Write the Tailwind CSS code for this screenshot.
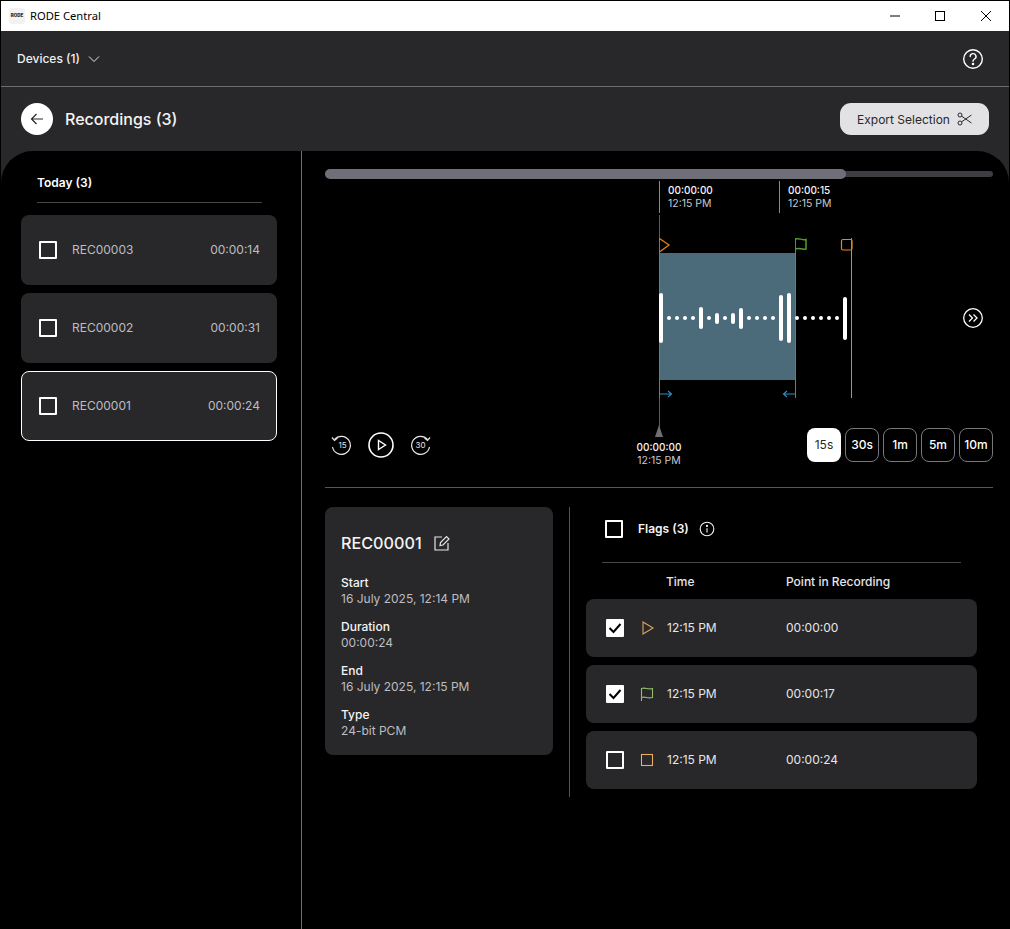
<!doctype html>
<html><head><meta charset="utf-8">
<script src="https://cdn.jsdelivr.net/npm/@tailwindcss/browser@4"></script>
</head>
<body class="bg-black">
<div class="w-[1010px] h-[929px] flex flex-col overflow-hidden border-t border-x border-black bg-[#28282a] font-['Inter',sans-serif] text-white">
  <!-- title bar -->
  <div class="h-[30px] shrink-0 bg-white flex items-center text-black">
    <div class="ml-[8px] w-4 h-4 rounded-[3px] bg-[#f2f2f2] flex items-center justify-center text-[4.5px] font-black leading-none text-[#333]">RODE</div>
    <span class="ml-[5px] font-['Noto_Sans',sans-serif] text-[11.2px]">RODE Central</span>
    <div class="ml-auto flex items-center">
      <svg class="w-[46px] h-[30px]" viewBox="0 0 46 30"><path d="M19 15h10" stroke="#000" fill="none"/></svg>
      <svg class="w-[46px] h-[30px]" viewBox="0 0 46 30"><rect x="18.5" y="10.5" width="9" height="9" stroke="#000" fill="none"/></svg>
      <svg class="w-[46px] h-[30px]" viewBox="0 0 46 30"><path d="M18 10l10 10M28 10l-10 10" stroke="#000" fill="none"/></svg>
    </div>
  </div>
  <!-- nav -->
  <div class="h-[56px] shrink-0 flex items-center pl-4 pr-[25px] border-b border-[#6c6c72]">
    <span class="text-[12px] font-medium text-[#f0f0f2]">Devices (1)</span>
    <svg class="ml-2 w-[12px] h-[8px]" viewBox="0 0 12 8"><path d="M1 1.500l5 5 5-5" stroke="#e6e6e8" fill="none"/></svg>
    <svg class="ml-auto w-[22px] h-[22px]" viewBox="0 0 22 22" fill="none" stroke="#fff" stroke-width="1.400"><circle cx="11" cy="11" r="9.300"/><path d="M8.200 8.600a2.900 2.900 0 1 1 4.400 2.400c-1 .6-1.600 1.100-1.600 2.300" stroke-linecap="round"/><circle cx="11" cy="16" r=".6" fill="#fff"/></svg>
  </div>
  <!-- header -->
  <div class="h-[64px] shrink-0 flex items-center pl-5 pr-5">
    <div class="w-8 h-8 rounded-full bg-white flex items-center justify-center">
      <svg class="w-[14px] h-[12px]" viewBox="0 0 14 12" fill="none" stroke="#28282a" stroke-width="1.200"><path d="M13 6H1.500M6.500 1l-5 5 5 5"/></svg>
    </div>
    <span class="ml-3 text-[16px] font-medium text-[#f4f4f5]">Recordings (3)</span>
    <div class="ml-auto w-[149px] h-8 rounded-[11px] bg-[#e2e2e5] flex items-center justify-center gap-[7px] text-[#28282a]">
      <span class="text-[12px] font-normal pt-[2px]">Export Selection</span>
      <svg class="w-[15px] h-[14px]" viewBox="0 0 15 14" fill="none" stroke="#28282a" stroke-width="1"><circle cx="3" cy="3" r="2"/><circle cx="3" cy="11" r="2"/><path d="M4.600 4.200L14.500 11M4.600 9.800L14.500 3"/></svg>
    </div>
  </div>
  <!-- main -->
  <div class="flex-1 flex bg-black rounded-t-[32px] overflow-hidden min-h-0">
    <!-- left -->
    <div class="w-[301px] shrink-0 border-r border-[#6c6c72] pl-5 pr-[24px]">
      <div class="mx-4 h-[52px] pt-[24px] border-b border-[#48484c] text-[12px] font-semibold leading-[15px] mr-[-1px] w-[225px]">Today (3)</div>
      <div class="mt-3 flex flex-col gap-2">
        <div class="h-[70px] rounded-lg bg-[#28282a] flex items-center pl-[18px] pr-[17px] text-[12px] text-[#bdbdc0]">
          <div class="w-[18px] h-[18px] border-2 border-white rounded-[1px]"></div><span class="ml-[15px]">REC00003</span><span class="ml-auto">00:00:14</span>
        </div>
        <div class="h-[70px] rounded-lg bg-[#28282a] flex items-center pl-[18px] pr-[17px] text-[12px] text-[#bdbdc0]">
          <div class="w-[18px] h-[18px] border-2 border-white rounded-[1px]"></div><span class="ml-[15px]">REC00002</span><span class="ml-auto">00:00:31</span>
        </div>
        <div class="h-[70px] rounded-lg bg-[#28282a] border border-white flex items-center pl-[17px] pr-[16px] text-[12px] text-[#bdbdc0]">
          <div class="w-[18px] h-[18px] border-2 border-white rounded-[1px]"></div><span class="ml-[15px]">REC00001</span><span class="ml-auto">00:00:24</span>
        </div>
      </div>
    </div>
    <!-- right -->
    <div class="flex-1 pl-[23px] pr-4 min-w-0">
      <!-- timeline canvas: origin x=325,y=151 -->
      <div class="relative h-[337px] border-b border-[#55555a] w-[668px]">
        <div class="absolute left-0 right-0 top-[20px] h-[6px] rounded-full bg-[#3d3d42]"></div>
        <div class="absolute left-0 w-[521px] top-[18px] h-[10px] rounded-full bg-[#6f6f78]"></div>

        <div class="absolute left-[334px] top-[30px] w-px h-[32px] bg-[#8a8a8e]"></div>
        <div class="absolute left-[343px] top-[33px] text-[10px] leading-[13px] whitespace-nowrap"><div class="font-medium text-[#f4f4f5]">00:00:00</div><div class="text-[10.500px] text-[#c8c8cc]">12:15 PM</div></div>
        <div class="absolute left-[454px] top-[30px] w-px h-[32px] bg-[#8a8a8e]"></div>
        <div class="absolute left-[463px] top-[33px] text-[10px] leading-[13px] whitespace-nowrap"><div class="font-medium text-[#f4f4f5]">00:00:15</div><div class="text-[10.500px] text-[#c8c8cc]">12:15 PM</div></div>

        <div class="absolute left-[334px] top-[64px] w-px h-[212px] bg-[#5c5c62]"></div>
        <div class="absolute left-[334px] top-[102px] w-[136px] h-[127px] bg-[#4b6a7a]"></div>
        <div class="absolute left-[334px] top-[87px] w-px h-[160px] bg-[#2f8fc4]"></div>
        <div class="absolute left-[470px] top-[87px] w-px h-[160px] bg-[#2f8fc4]"></div>
        <div class="absolute left-[526px] top-[87px] w-px h-[160px] bg-[#e8861c]"></div>

        <svg class="absolute left-[330px] top-[80px] overflow-visible" width="200" height="180" viewBox="0 0 200 180" fill="none">
          <path d="M4.500 7.500l9.500 6.500-9.500 7" stroke="#e8861c" stroke-width="1.200"/>
          <path d="M140.500 8c3.500-1.500 6.500 1.500 10.500 0.500v9.500c-4 1-7-1.500-10.500 0" stroke="#4ea02c" stroke-width="1.500"/>
          <rect x="186.500" y="8.500" width="10.500" height="10.500" rx="1.500" stroke="#e8861c" stroke-width="1.200"/>
          <path d="M5 163h11M13 160l3.500 3-3.500 3" stroke="#2f8fc4" stroke-width="1.100"/>
          <path d="M140 163h-11M132 160l-3.500 3 3.500 3" stroke="#2f8fc4" stroke-width="1.100"/>
        </svg>

        <!-- waveform -->
        <div class="absolute left-[334px] top-[142px] h-[50px] w-[188px] flex items-center">
          <div class="w-[4px] h-[50px] rounded-full bg-white"></div>
          <div class="flex items-center gap-[4px] ml-[4px]">
            <div class="w-[4px] h-[4px] rounded-full bg-white"></div><div class="w-[4px] h-[4px] rounded-full bg-white"></div><div class="w-[4px] h-[4px] rounded-full bg-white"></div><div class="w-[4px] h-[4px] rounded-full bg-white"></div>
            <div class="w-[4px] h-[22px] rounded-full bg-white"></div>
            <div class="w-[4px] h-[4px] rounded-full bg-white"></div>
            <div class="w-[4px] h-[11px] rounded-full bg-white"></div>
            <div class="w-[4px] h-[4px] rounded-full bg-white"></div>
            <div class="w-[4px] h-[11px] rounded-full bg-white"></div>
            <div class="w-[4px] h-[21px] rounded-full bg-white"></div>
            <div class="w-[4px] h-[4px] rounded-full bg-white"></div><div class="w-[4px] h-[4px] rounded-full bg-white"></div><div class="w-[4px] h-[4px] rounded-full bg-white"></div><div class="w-[4px] h-[4px] rounded-full bg-white"></div>
            <div class="w-[4px] h-[46px] rounded-full bg-white"></div>
            <div class="w-[4px] h-[50px] rounded-full bg-white"></div>
            <div class="w-[4px] h-[4px] rounded-full bg-white"></div><div class="w-[4px] h-[4px] rounded-full bg-white"></div><div class="w-[4px] h-[4px] rounded-full bg-white"></div><div class="w-[4px] h-[4px] rounded-full bg-white"></div><div class="w-[4px] h-[4px] rounded-full bg-white"></div><div class="w-[4px] h-[4px] rounded-full bg-white"></div>
            <div class="w-[4px] h-[43px] rounded-full bg-white"></div>
          </div>
        </div>

        <!-- playhead -->
        <div class="absolute left-[330px] top-[274px] w-0 h-0 border-x-[4px] border-x-transparent border-b-[12px] border-b-[#6f6f75]"></div>
        <div class="absolute left-[294px] top-[290px] w-[80px] text-center text-[10px] leading-[13px]"><div class="font-medium text-[#f4f4f5]">00:00:00</div><div class="text-[10.500px] text-[#c8c8cc]">12:15 PM</div></div>

        <!-- next -->
        <svg class="absolute left-[637px] top-[156px]" width="22" height="22" viewBox="0 0 22 22" fill="none" stroke="#fff" stroke-width="1.300"><circle cx="11" cy="11" r="9.300"/><path d="M7 7.500l3.500 3.500-3.500 3.500M11.500 7.500l3.500 3.500-3.500 3.500"/></svg>

        <!-- transport -->
        <div class="absolute left-[5px] top-[281px] flex items-center gap-[13px]">
          <div class="relative w-[22px] h-[22px]">
            <svg width="22" height="22" viewBox="0 0 22 22" fill="none" stroke="#e6e6e8" stroke-width="1.200"><path d="M4.500 5.500A9 9 0 1 1 2.500 13"/><path d="M2 3.500l2.500 3 3-2.500" /></svg>
            <span class="absolute inset-0 flex items-center justify-center pl-[3px] text-[8px] text-[#e6e6e8]">15</span>
          </div>
          <svg class="ml-[3px]" width="26" height="26" viewBox="0 0 26 26" fill="none" stroke="#fff" stroke-width="1.600"><circle cx="13" cy="13" r="12"/><path d="M10.500 8.500v9l7-4.500z" stroke-width="1.400"/></svg>
          <div class="relative w-[22px] h-[22px] ml-[3px]">
            <svg width="22" height="22" viewBox="0 0 22 22" fill="none" stroke="#e6e6e8" stroke-width="1.200"><path d="M17.500 5.500A9 9 0 1 0 19.500 13"/><path d="M20 3.500l-2.500 3-3-2.500"/></svg>
            <span class="absolute inset-0 flex items-center justify-center pr-[1px] text-[8px] text-[#e6e6e8]">30</span>
          </div>
        </div>

        <!-- zoom levels -->
        <div class="absolute right-0 top-[277px] flex gap-1 text-[12px] font-medium">
          <div class="w-[34px] h-[34px] rounded-lg bg-white text-[#28282a] flex items-center justify-center font-normal">15s</div>
          <div class="w-[34px] h-[34px] rounded-lg border border-[#77777c] flex items-center justify-center">30s</div>
          <div class="w-[34px] h-[34px] rounded-lg border border-[#77777c] flex items-center justify-center">1m</div>
          <div class="w-[34px] h-[34px] rounded-lg border border-[#77777c] flex items-center justify-center">5m</div>
          <div class="w-[34px] h-[34px] rounded-lg border border-[#77777c] flex items-center justify-center">10m</div>
        </div>
      </div>

      <!-- details -->
      <div class="flex mt-[19px] w-[668px]">
        <div class="w-[228px] h-[248px] shrink-0 rounded-lg bg-[#28282a] pl-4 pt-[24px]">
          <div class="flex items-center h-6">
            <span class="text-[16.200px] font-medium leading-6 text-[#f4f4f5]">REC00001</span>
            <svg class="ml-[12px]" width="16" height="16" viewBox="0 0 16 16" fill="none" stroke="#e6e6e8" stroke-width="1.200"><path d="M8 2H1v13h13V8"/><path d="M6 10.500l.5-3L12.500 1.500l2.500 2.500-6 6z"/></svg>
          </div>
          <div class="mt-[20px] text-[12px] leading-4 flex flex-col gap-3">
            <div><div class="font-medium text-[#f4f4f5]">Start</div><div class="text-[#bdbdc0]">16 July 2025, 12:14 PM</div></div>
            <div><div class="font-medium text-[#f4f4f5]">Duration</div><div class="text-[#bdbdc0]">00:00:24</div></div>
            <div><div class="font-medium text-[#f4f4f5]">End</div><div class="text-[#bdbdc0]">16 July 2025, 12:15 PM</div></div>
            <div><div class="font-medium text-[#f4f4f5]">Type</div><div class="text-[#bdbdc0]">24-bit PCM</div></div>
          </div>
        </div>
        <div class="ml-4 w-px h-[290px] bg-[#55555a]"></div>
        <div class="ml-4 w-[391px]">
          <div class="mx-4 w-[359px] h-[56px] border-b border-[#48484c] flex items-center pl-[3px] pb-[11px]">
            <div class="w-[18px] h-[18px] border-2 border-white rounded-[1px]"></div>
            <span class="ml-[15px] text-[12px] font-semibold text-[#f4f4f5]">Flags (3)</span>
            <svg class="ml-[10px]" width="16" height="16" viewBox="0 0 16 16" fill="none" stroke="#f4f4f5" stroke-width="1.100"><circle cx="8" cy="8" r="6.800"/><path d="M8 7.200v4.300"/><circle cx="8" cy="4.900" r=".5" fill="#fff"/></svg>
          </div>
          <div class="h-[36px] pt-[2px] flex items-center text-[12px] font-medium text-[#e6e6e8]">
            <span class="ml-[80px] w-[120px]">Time</span><span>Point in Recording</span>
          </div>
          <div class="flex flex-col gap-2 text-[12px] text-[#e6e6e8]">
            <div class="h-[58px] rounded-lg bg-[#28282a] flex items-center pl-5">
              <div class="w-[18px] h-[18px] bg-white rounded-[1px] flex items-center justify-center"><svg width="14" height="12" viewBox="0 0 14 12" fill="none" stroke="#000" stroke-width="2"><path d="M1.500 6l4 4 7-8"/></svg></div>
              <svg class="ml-[17px]" width="14" height="16" viewBox="0 0 14 16" fill="none" stroke="#dca460" stroke-width="1.100"><path d="M2 2v12l10-6z"/></svg>
              <span class="ml-[12px] w-[119px]">12:15 PM</span><span>00:00:00</span>
            </div>
            <div class="h-[58px] rounded-lg bg-[#28282a] flex items-center pl-5">
              <div class="w-[18px] h-[18px] bg-white rounded-[1px] flex items-center justify-center"><svg width="14" height="12" viewBox="0 0 14 12" fill="none" stroke="#000" stroke-width="2"><path d="M1.500 6l4 4 7-8"/></svg></div>
              <svg class="ml-[16px]" width="14" height="16" viewBox="0 0 14 16" fill="none" stroke="#8fbf6c" stroke-width="1.100"><path d="M1.500 15V2.500c4-1.500 6 1.500 11 0v9c-5 1.500-7-1.500-11 0"/></svg>
              <span class="ml-[13px] w-[119px]">12:15 PM</span><span>00:00:17</span>
            </div>
            <div class="h-[58px] rounded-lg bg-[#28282a] flex items-center pl-5">
              <div class="w-[18px] h-[18px] border-2 border-white rounded-[1px]"></div>
              <svg class="ml-[16px]" width="14" height="16" viewBox="0 0 14 16" fill="none" stroke="#e8ab62" stroke-width="1.100"><rect x="1.500" y="2.500" width="11" height="11"/></svg>
              <span class="ml-[13px] w-[119px]">12:15 PM</span><span>00:00:24</span>
            </div>
          </div>
        </div>
      </div>
    </div>
  </div>
</div>
</body></html>
